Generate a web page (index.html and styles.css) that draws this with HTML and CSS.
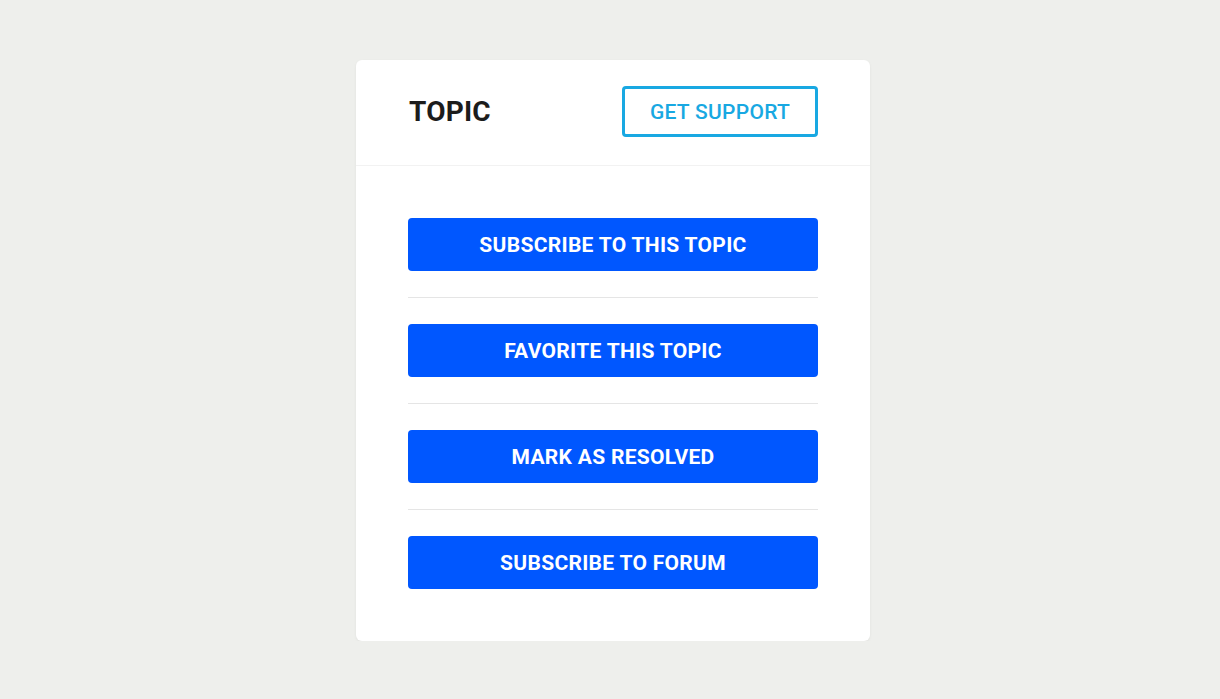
FILE: index.html
```html
<!DOCTYPE html>
<html lang="en">
<head>
<meta charset="utf-8">
<title>Topic</title>
<link rel="stylesheet" href="styles.css">
</head>
<body>
<div class="page">
  <div class="card">
    <div class="card-header">
      <h2 class="title">TOPIC</h2>
      <button class="btn-outline">GET SUPPORT</button>
    </div>
    <div class="card-body">
      <button class="btn">SUBSCRIBE TO THIS TOPIC</button>
      <div class="sep"></div>
      <button class="btn">FAVORITE THIS TOPIC</button>
      <div class="sep"></div>
      <button class="btn">MARK AS RESOLVED</button>
      <div class="sep"></div>
      <button class="btn">SUBSCRIBE TO FORUM</button>
    </div>
  </div>
</div>
</body>
</html>
```

FILE: styles.css
```css
html, body {
  margin: 0;
  padding: 0;
}
body {
  background: #eeefec;
  font-family: Roboto, "Liberation Sans", sans-serif;
}
.page {
  display: flex;
  justify-content: center;
  padding: 60px 0 0 6px;
}
.card {
  width: 514px;
  background: #ffffff;
  border-radius: 6px;
  box-shadow: 0 1px 3px rgba(0, 0, 0, 0.06);
}
.card-header {
  height: 106px;
  box-sizing: border-box;
  padding: 26px 52px 0 53px;
  display: flex;
  align-items: flex-start;
  justify-content: space-between;
  border-bottom: 1px solid #f2f2f2;
}
.title {
  margin: 0;
  font-size: 28px;
  line-height: 51px;
  font-weight: 700;
  color: #1c1c1c;
  letter-spacing: 0.2px;
}
.btn-outline {
  width: 196px;
  height: 51px;
  box-sizing: border-box;
  border: 3px solid #18a8e2;
  border-radius: 4px;
  background: #fff;
  color: #18a8e2;
  font-family: inherit;
  font-size: 21px;
  font-weight: 500;
  letter-spacing: 0.3px;
  padding: 0;
}
.card-body {
  padding: 52px;
  display: flex;
  flex-direction: column;
}
.btn {
  height: 53px;
  border: 0;
  border-radius: 4px;
  background: #0057ff;
  color: #fff;
  font-family: inherit;
  font-size: 21px;
  font-weight: 700;
  padding: 0;
  letter-spacing: 0.3px;
}
.sep {
  height: 1px;
  background: #e5e5e5;
  margin: 26px 0;
}
```
